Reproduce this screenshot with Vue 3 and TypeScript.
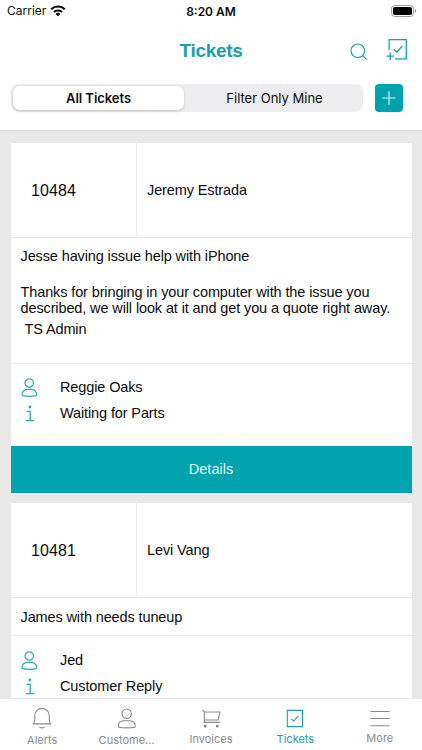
<script setup lang="ts">
import { ref } from 'vue'

interface Ticket {
  id: number
  customer: string
  subject: string
  comment?: string[]
  author?: string
  assignee: string
  status: string
}

const tickets: Ticket[] = [
  {
    id: 10484,
    customer: 'Jeremy Estrada',
    subject: 'Jesse having issue help with iPhone',
    comment: [
      'Thanks for bringing in your computer with the issue you',
      'described, we will look at it and get you a quote right away.',
    ],
    author: 'TS Admin',
    assignee: 'Reggie Oaks',
    status: 'Waiting for Parts',
  },
  {
    id: 10481,
    customer: 'Levi Vang',
    subject: 'James with needs tuneup',
    assignee: 'Jed',
    status: 'Customer Reply',
  },
]

const filters = ['All Tickets', 'Filter Only Mine']
const activeFilter = ref(0)
const tabs = ['Alerts', 'Custome...', 'Invoices', 'Tickets', 'More']
const activeTab = ref('Tickets')
</script>

<template>
  <div class="screen">
    <header class="top">
      <div class="status">
        <div class="carrier">
          <span>Carrier</span>
          <svg width="16" height="12" viewBox="0 0 16 12" fill="none" stroke="#000" stroke-width="2.1">
            <path d="M1.2 4.3a9.8 9.8 0 0 1 13.6 0" />
            <path d="M3.9 7.1a5.9 5.9 0 0 1 8.2 0" />
            <path d="M8 11.2 5.6 8.9a3.5 3.5 0 0 1 4.8 0z" fill="#000" stroke="none" />
          </svg>
        </div>
        <span class="time">8:20 AM</span>
        <svg class="battery" width="26" height="12" viewBox="0 0 26 12">
          <rect x=".5" y=".5" width="22" height="11" rx="3.2" fill="none" stroke="#9a9a9a" />
          <rect x="2" y="2" width="19" height="8" rx="1.8" />
          <path d="M24 4v4a2.2 2.2 0 0 0 0-4z" fill="#8c8c8c" />
        </svg>
      </div>

      <div class="title-row">
        <h1>Tickets</h1>
        <div class="actions">
          <svg class="search" width="18" height="18" viewBox="0 0 18 18" fill="none" stroke="#1ba0aa" stroke-width="1.15">
            <circle cx="7.8" cy="7.8" r="6.8" />
            <path d="m12.7 12.7 4 4" />
          </svg>
          <svg class="new-ticket" width="22" height="23" viewBox="0 0 22 23" fill="none" stroke="#1ba0aa" stroke-width="1.3">
            <path d="M3.1 12V1.6h17.2v19.2H9M.6 18.1H8M4.3 14.4V22" />
            <path d="m7.6 11.3 3.3 3 5.2-6.2" stroke-width="1.4" />
          </svg>
        </div>
      </div>

      <div class="filter-row">
        <div class="segmented">
          <button
            v-for="(filter, i) in filters"
            :key="filter"
            :class="['segment', { selected: activeFilter === i }]"
            @click="activeFilter = i"
          >
            {{ filter }}
          </button>
        </div>
        <button class="add" aria-label="Add">
          <svg width="14" height="14" viewBox="0 0 14 14" fill="none" stroke="#d9f2f3" stroke-width="1.2">
            <path d="M7 .3v13.4M.3 7h13.4" />
          </svg>
        </button>
      </div>
    </header>

    <main class="list">
      <article v-for="ticket in tickets" :key="ticket.id" class="card">
        <div class="card-head">
          <div class="number">{{ ticket.id }}</div>
          <div class="customer">{{ ticket.customer }}</div>
        </div>
        <div :class="['issue', { full: ticket.comment }]">
          <p class="subject">{{ ticket.subject }}</p>
          <div v-if="ticket.comment" class="comment">
            <p v-for="line in ticket.comment" :key="line">{{ line }}</p>
          </div>
          <p v-if="ticket.author" class="author">{{ ticket.author }}</p>
        </div>
        <div class="meta">
          <div class="meta-row">
            <svg width="17" height="19" viewBox="0 0 17 19" fill="none" stroke="#2aa9b0" stroke-width="1.2">
              <circle cx="8.2" cy="5" r="4.2" />
              <path d="M1.3 17.6C.3 14 3.1 11.4 6 11.4h4.6c3 0 5.6 2.6 4.7 6.2-3.6.7-10.4.7-14 0z" stroke-linejoin="round" />
            </svg>
            <span>{{ ticket.assignee }}</span>
          </div>
          <div class="meta-row">
            <svg width="17" height="17" viewBox="0 0 17 17" fill="none" stroke="#2aa9b0" stroke-width="1.3">
              <path d="M5.5 6.3h3.7v9.3M5 15.6h8" />
              <circle cx="8.9" cy="2" r="1.4" fill="#2aa9b0" stroke="none" />
            </svg>
            <span>{{ ticket.status }}</span>
          </div>
        </div>
        <button class="details">Details</button>
      </article>
    </main>

    <nav class="tabs">
      <button
        v-for="tab in tabs"
        :key="tab"
        :class="['tab', 'tab-' + tab.replace(/\./g, '').toLowerCase(), { active: activeTab === tab }]"
        @click="activeTab = tab"
      >
        <svg v-if="tab === 'Alerts'" width="20" height="22" viewBox="0 0 20 22">
          <path d="M1.1 16.9c1.5-1.3 1.7-2.7 1.7-5V8.5C2.8 4.3 6 1.4 10 1.4s7.2 2.9 7.2 7.1v3.4c0 2.3.3 3.7 1.7 5z" stroke-linejoin="round" />
          <path d="M7.3 19.7c1 1.5 4.4 1.5 5.4 0" />
        </svg>
        <svg v-else-if="tab === 'Custome...'" width="20" height="22" viewBox="0 0 20 22">
          <circle cx="9.7" cy="6.7" r="4.7" />
          <path d="M1.5 20.2c-1-4 1.9-6.5 4.9-6.5H13c3 0 5.9 2.5 4.9 6.5-4.4.7-12 .7-16.4 0z" stroke-linejoin="round" />
        </svg>
        <svg v-else-if="tab === 'Invoices'" width="20" height="22" viewBox="0 0 20 22">
          <path d="m1.5 3 1.9 1.9v10.4M2.4 15.4H19M3.4 5H19l-1.9 8H3.4" />
          <circle class="wheel" cx="4.1" cy="19" r="1.5" />
          <circle class="wheel" cx="16.3" cy="19" r="1.5" />
        </svg>
        <svg v-else-if="tab === 'Tickets'" width="20" height="22" viewBox="0 0 20 22">
          <path d="M2.3 3.4h15.2v16.2H2.3z" />
          <path d="m6.4 11.9 2.4 2.1 4.5-5.1" />
        </svg>
        <svg v-else width="20" height="22" viewBox="0 0 20 22">
          <path d="M.3 4.5h19.4M.3 11.5h19.4M.3 18.7h19.4" />
        </svg>
        <span>{{ tab }}</span>
      </button>
    </nav>
  </div>
</template>

<style>
body {
  margin: 0;
  overflow: hidden;
}
</style>

<style scoped>
* {
  box-sizing: border-box;
}

.screen {
  display: flex;
  flex-direction: column;
  width: 422px;
  height: 750px;
  overflow: hidden;
  background: #e8e8e8;
  color: #0c0c0c;
  font-family: 'Liberation Sans', Arial, sans-serif;
}

button {
  border: 0;
  padding: 0;
  font: inherit;
  letter-spacing: inherit;
  color: inherit;
  background: none;
}

svg {
  display: block;
  flex: none;
}

h1,
p {
  margin: 0;
}

.top {
  flex: none;
  height: 131px;
  background: #fff;
  border-bottom: 1px solid #dadada;
}

.status {
  display: grid;
  grid-template-columns: 1fr auto 1fr;
  align-items: center;
  height: 22px;
  padding: 0 5px 0 7px;
  font-family: Inter, sans-serif;
  font-size: 12px;
}

.carrier {
  display: flex;
  align-items: center;
  gap: 4px;
  margin-top: -1px;
}

.time {
  padding-right: 2px;
  font-weight: 600;
}

.battery {
  justify-self: end;
  margin-top: -1px;
}

.title-row {
  display: grid;
  grid-template-columns: 1fr auto 1fr;
  align-items: center;
  height: 58px;
  padding: 0 14px;
}

h1 {
  grid-column: 2;
  color: #1ba0aa;
  font-size: 19px;
  line-height: 22px;
  letter-spacing: -0.3px;
}

.actions {
  display: flex;
  align-items: center;
  justify-content: flex-end;
  gap: 18px;
}

.search {
  margin-top: 2px;
}

.new-ticket {
  margin-top: -3px;
}

.filter-row {
  display: flex;
  gap: 12px;
  height: 28px;
  margin-top: 4px;
  padding-left: 11px;
}

.segmented {
  display: grid;
  grid-template-columns: 171px 1fr;
  width: 352px;
  padding: 2px;
  border-radius: 8px;
  background: #ededef;
}

.segment {
  border-radius: 7px;
  font-family: Inter, sans-serif;
  font-size: 13px;
}

.segment:last-child {
  padding-left: 4px;
}

.selected {
  background: #fff;
  box-shadow: 0 1px 3px rgb(0 0 0 / 20%);
  font-weight: 600;
  letter-spacing: -0.05px;
}

.add {
  display: grid;
  place-items: center;
  width: 28px;
  height: 28px;
  border-radius: 4px;
  background: #00a3ad;
}

.list {
  flex: 1;
  display: flex;
  flex-direction: column;
  gap: 10px;
  min-height: 0;
  padding: 12px 10.5px 0;
  overflow: hidden;
}

.card {
  flex: none;
  background: #fff;
  font-size: 14.5px;
  line-height: 17px;
  letter-spacing: -0.12px;
}

.card-head {
  display: grid;
  grid-template-columns: 126px 1fr;
  height: 95px;
  border-bottom: 1px solid #e8e8e8;
}

.number,
.customer {
  display: flex;
  align-items: center;
}

.number {
  padding-left: 20.5px;
  border-right: 1px solid #e8e8e8;
  font-size: 16px;
  letter-spacing: 0.1px;
}

.customer {
  padding-left: 10.5px;
}

.issue {
  height: 38px;
  padding: 11px 10px 0;
  border-bottom: 1px solid #e8e8e8;
}

.full {
  height: 126px;
  padding-top: 10px;
}

.comment {
  margin-top: 19px;
  line-height: 16px;
  white-space: nowrap;
}

.author {
  margin: 5px 0 0 4px;
}

.meta {
  height: 83px;
  padding-top: 11px;
}

.full + .meta {
  height: 82px;
  padding-top: 10px;
}

.meta-row {
  display: flex;
  align-items: center;
  gap: 22.5px;
  height: 26.5px;
  padding-left: 10px;
}

.details {
  display: block;
  width: 100%;
  height: 47px;
  background: #00a3ad;
  color: #e9fafb;
  letter-spacing: 0;
}

.tabs {
  flex: none;
  display: grid;
  grid-template-columns: repeat(5, 1fr);
  height: 52px;
  border-top: 1px solid #e6e6e6;
  background: #fff;
}

.tab {
  display: flex;
  flex-direction: column;
  align-items: center;
  gap: 4px;
  padding-top: 8px;
  color: #878b90;
  font-family: Inter, sans-serif;
  font-size: 11px;
  line-height: 14px;
}

.tab svg {
  fill: none;
  stroke: currentColor;
  stroke-width: 1.1;
}

.tab .wheel {
  fill: currentColor;
  stroke: none;
}

.tab-invoices,
.tab-tickets {
  gap: 3px;
}

.tab-more {
  gap: 2px;
}

.tab.active {
  color: #1ba0aa;
}
</style>
